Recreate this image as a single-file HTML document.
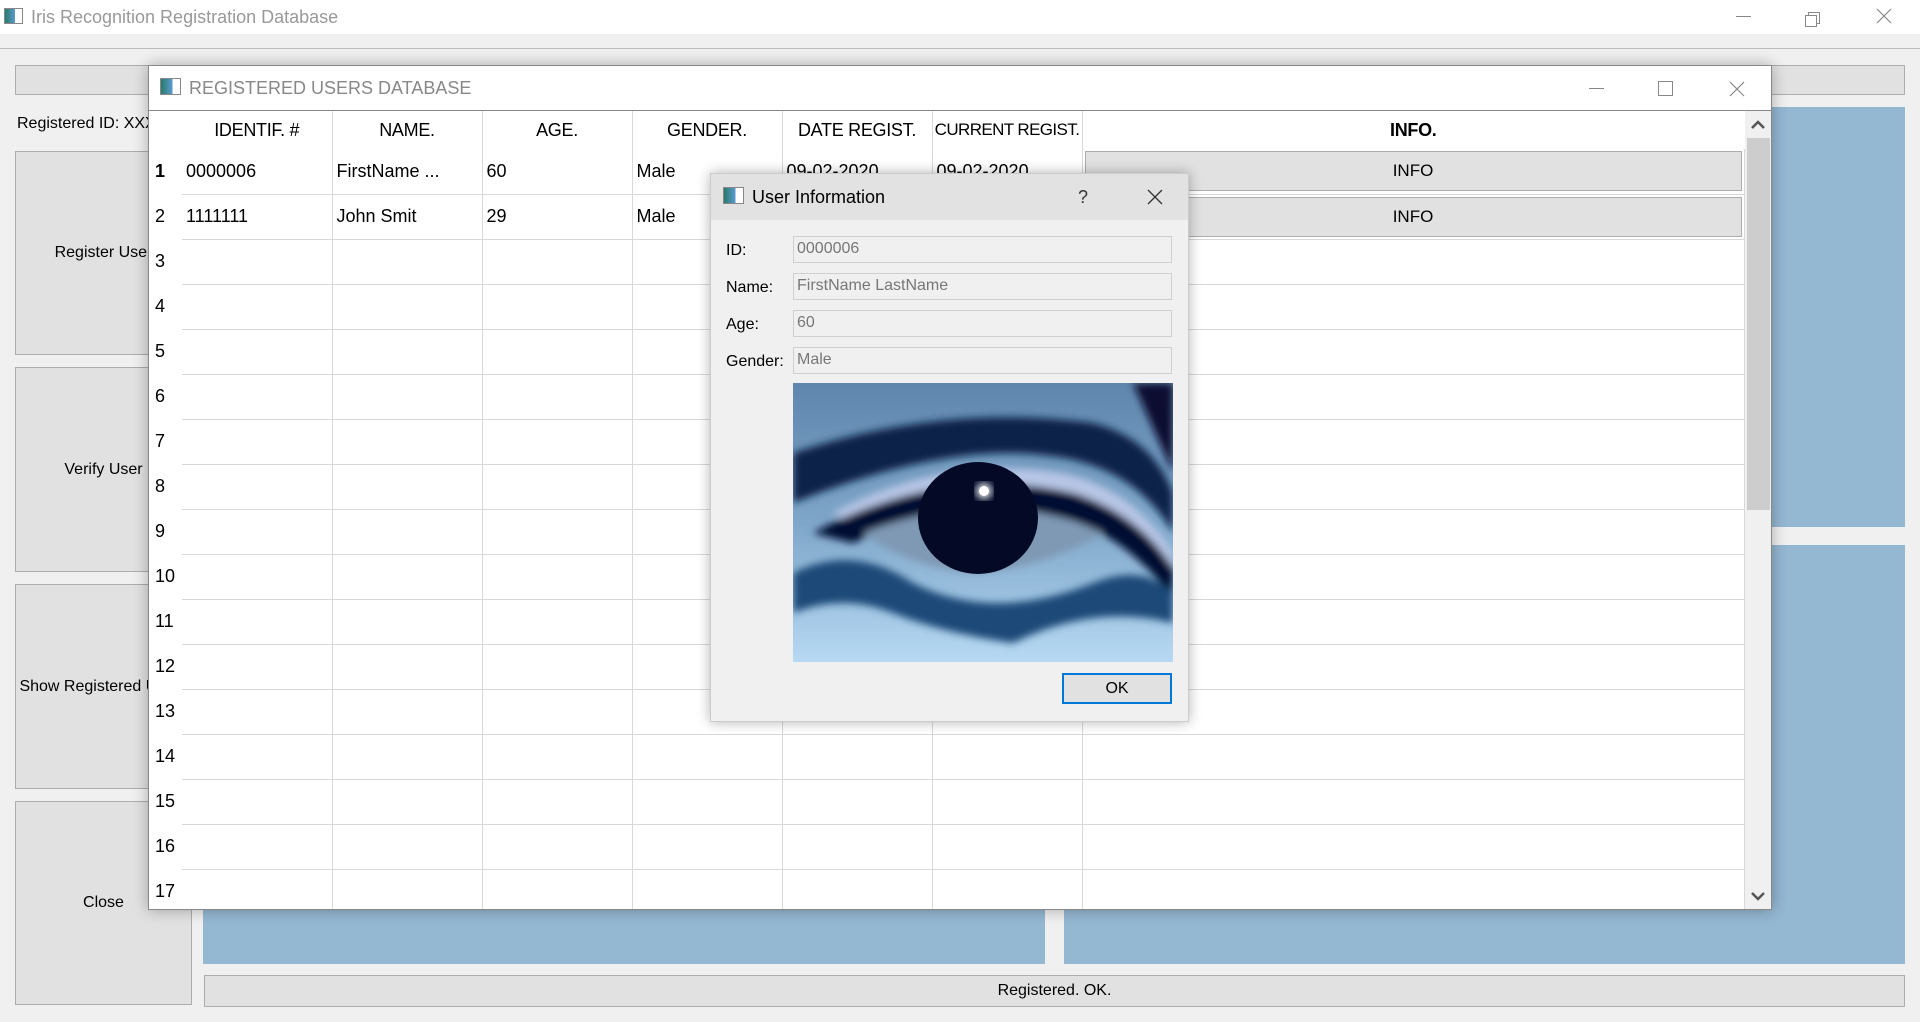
<!DOCTYPE html>
<html><head><meta charset="utf-8"><style>
*{box-sizing:border-box;margin:0;padding:0}
body{width:1920px;height:1022px;background:#f0f0f0;font-family:"Liberation Sans",sans-serif;position:relative;overflow:hidden;color:#000}
.a{position:absolute}
.btn{position:absolute;background:#e1e1e1;border:1px solid #adadad;font-size:16px;display:flex;align-items:center;justify-content:center}
.blue{position:absolute;background:#94b7d2}
table{border-collapse:collapse;table-layout:fixed;font-size:18px}
td{height:45px;border-right:1px solid #d8d8d8;border-bottom:1px solid #d8d8d8;padding-left:4px;white-space:nowrap;overflow:hidden}
td.v{border:none;width:33px;padding-left:6px}
th{height:38px;font-weight:normal;border-right:1px solid #d8d8d8;white-space:nowrap;overflow:hidden;letter-spacing:-0.3px}
.lbl{position:absolute;left:726px;font-size:16px}
.inp{position:absolute;left:793px;width:379px;height:27px;border:1px solid #cfcfcf;background:#f0f0f0;color:#777;font-size:16px;padding:3px 3px}
</style></head><body>
<div class="a" style="left:0;top:0;width:1920px;height:34px;background:#fff"></div>
<div class="a" style="left:4px;top:8px;width:19px;height:16px;border:1px solid #888;background:linear-gradient(90deg,#2a7a6a 0,#5a9ad0 60%,#fff 60%)"></div>
<div class="a" style="left:31px;top:7px;font-size:18px;color:#999">Iris Recognition Registration Database</div>
<div class="a" style="left:1736px;top:16px;width:15px;height:1px;background:#888"></div>
<div class="a" style="left:1808px;top:12px;width:12px;height:12px;border:1px solid #888;background:#fff"></div>
<div class="a" style="left:1805px;top:15px;width:12px;height:12px;border:1px solid #888;background:#fff"></div>
<svg class="a" style="left:1876px;top:8px" width="16" height="16"><path d="M1 1L15 15M15 1L1 15" stroke="#888" stroke-width="1.2"/></svg>
<div class="a" style="left:0;top:48px;width:1920px;height:1px;background:#bbb"></div>
<div class="a" style="left:15px;top:65px;width:1890px;height:30px;background:#e1e1e1;border:1px solid #adadad"></div>
<div class="a" style="left:17px;top:115px;font-size:16px">Registered ID: XXX</div>
<div class="btn" style="left:15px;top:151px;width:177px;height:204px">Register User</div>
<div class="btn" style="left:15px;top:367px;width:177px;height:205px">Verify User</div>
<div class="btn" style="left:15px;top:584px;width:177px;height:205px">Show Registered Users</div>
<div class="btn" style="left:15px;top:801px;width:177px;height:204px">Close</div>
<div class="blue" style="left:1772px;top:107px;width:133px;height:420px"></div>
<div class="blue" style="left:1064px;top:545px;width:841px;height:419px"></div>
<div class="blue" style="left:203px;top:890px;width:842px;height:74px"></div>
<div class="btn" style="left:204px;top:975px;width:1701px;height:32px">Registered. OK.</div>

<div class="a" style="left:148px;top:65px;width:1624px;height:845px;background:#fff;border:1px solid #888;box-shadow:0 0 14px rgba(0,0,0,.3);overflow:hidden">
 <div class="a" style="left:0;top:0;width:1624px;height:45px;border-bottom:1px solid #888"></div>
 <div class="a" style="left:11px;top:12px;width:21px;height:17px;border:1px solid #888;background:linear-gradient(90deg,#2a7a6a 0,#5a9ad0 60%,#fff 60%)"></div>
 <div class="a" style="left:40px;top:12px;font-size:18px;color:#888">REGISTERED USERS DATABASE</div>
 <div class="a" style="left:1440px;top:22px;width:15px;height:1px;background:#888"></div>
 <div class="a" style="left:1509px;top:15px;width:15px;height:15px;border:1px solid #888"></div>
 <svg class="a" style="left:1580px;top:15px" width="16" height="16"><path d="M1 1L15 15M15 1L1 15" stroke="#888" stroke-width="1.2"/></svg>
 <table class="a" style="left:0;top:45px;width:1595px">
  <colgroup><col style="width:33px"><col style="width:150px"><col style="width:150px"><col style="width:150px"><col style="width:150px"><col style="width:150px"><col style="width:150px"><col style="width:662px"></colgroup>
  <tr><th style="border:none"></th><th>IDENTIF. #</th><th>NAME.</th><th>AGE.</th><th>GENDER.</th><th>DATE REGIST.</th><th style="font-size:17px;letter-spacing:-0.6px">CURRENT REGIST.</th><th style="font-weight:bold;border:none">INFO.</th></tr>
  <tr><td class="v"><b>1</b></td><td>0000006</td><td>FirstName ...</td><td>60</td><td>Male</td><td>09-02-2020</td><td>09-02-2020</td><td style="padding:2px"><div style="height:40px;background:#e1e1e1;border:1px solid #adadad;display:flex;align-items:center;justify-content:center;font-size:17px">INFO</div></td></tr>
  <tr><td class="v">2</td><td>1111111</td><td>John Smit</td><td>29</td><td>Male</td><td></td><td></td><td style="padding:2px"><div style="height:40px;background:#e1e1e1;border:1px solid #adadad;display:flex;align-items:center;justify-content:center;font-size:17px">INFO</div></td></tr>
  <tr><td class="v">3</td><td></td><td></td><td></td><td></td><td></td><td></td><td></td></tr>
  <tr><td class="v">4</td><td></td><td></td><td></td><td></td><td></td><td></td><td></td></tr>
  <tr><td class="v">5</td><td></td><td></td><td></td><td></td><td></td><td></td><td></td></tr>
  <tr><td class="v">6</td><td></td><td></td><td></td><td></td><td></td><td></td><td></td></tr>
  <tr><td class="v">7</td><td></td><td></td><td></td><td></td><td></td><td></td><td></td></tr>
  <tr><td class="v">8</td><td></td><td></td><td></td><td></td><td></td><td></td><td></td></tr>
  <tr><td class="v">9</td><td></td><td></td><td></td><td></td><td></td><td></td><td></td></tr>
  <tr><td class="v">10</td><td></td><td></td><td></td><td></td><td></td><td></td><td></td></tr>
  <tr><td class="v">11</td><td></td><td></td><td></td><td></td><td></td><td></td><td></td></tr>
  <tr><td class="v">12</td><td></td><td></td><td></td><td></td><td></td><td></td><td></td></tr>
  <tr><td class="v">13</td><td></td><td></td><td></td><td></td><td></td><td></td><td></td></tr>
  <tr><td class="v">14</td><td></td><td></td><td></td><td></td><td></td><td></td><td></td></tr>
  <tr><td class="v">15</td><td></td><td></td><td></td><td></td><td></td><td></td><td></td></tr>
  <tr><td class="v">16</td><td></td><td></td><td></td><td></td><td></td><td></td><td></td></tr>
  <tr><td class="v">17</td><td></td><td></td><td></td><td></td><td></td><td></td><td></td></tr>
 </table>
 <div class="a" style="left:1596px;top:45px;width:28px;height:800px;background:#f0f0f0"></div>
 <div class="a" style="left:1598px;top:72px;width:23px;height:372px;background:#cdcdcd"></div>
 <svg class="a" style="left:1601px;top:52px" width="16" height="14"><path d="M2 10L8 4L14 10" stroke="#555" stroke-width="2.5" fill="none"/></svg>
 <svg class="a" style="left:1601px;top:823px" width="16" height="14"><path d="M2 4L8 10L14 4" stroke="#555" stroke-width="2.5" fill="none"/></svg>
</div>

<div class="a" style="left:710px;top:173px;width:479px;height:549px;background:#f0f0f0;border:1px solid #ccc;box-shadow:0 0 12px rgba(0,0,0,.3)">
 <div class="a" style="left:0;top:0;width:477px;height:46px;background:#e2e2e2"></div>
 <div class="a" style="left:12px;top:13px;width:21px;height:17px;border:1px solid #888;background:linear-gradient(90deg,#2a7a6a 0,#5a9ad0 60%,#fff 60%)"></div>
 <div class="a" style="left:41px;top:13px;font-size:18px">User Information</div>
 <div class="a" style="left:367px;top:13px;font-size:18px;color:#333">?</div>
 <svg class="a" style="left:436px;top:15px" width="16" height="16"><path d="M1 1L15 15M15 1L1 15" stroke="#333" stroke-width="1.3"/></svg>
</div>
<div class="lbl" style="top:242px">ID:</div>
<div class="lbl" style="top:279px">Name:</div>
<div class="lbl" style="top:316px">Age:</div>
<div class="lbl" style="top:353px">Gender:</div>
<div class="inp" style="top:236px">0000006</div>
<div class="inp" style="top:273px">FirstName LastName</div>
<div class="inp" style="top:310px">60</div>
<div class="inp" style="top:347px">Male</div>
<svg class="a" style="left:793px;top:383px" width="380" height="279" viewBox="0 0 380 279">
 <defs>
  <linearGradient id="bg" x1="0" y1="0" x2="0" y2="1"><stop offset="0" stop-color="#5f86ad"/><stop offset=".5" stop-color="#7ea6c9"/><stop offset="1" stop-color="#b7d9f3"/></linearGradient>
  <filter id="bl"><feGaussianBlur stdDeviation="4"/></filter>
 </defs>
 <rect width="380" height="279" fill="url(#bg)"/>
 <g filter="url(#bl)">
  <path d="M340 0L380 0L380 90Z" fill="#0a1030"/>
  <path d="M0 70Q150 20 300 40Q360 55 380 110L380 150Q340 80 250 72Q150 60 0 120Z" fill="#0e2248"/>
  <path d="M40 130Q150 70 270 90Q340 105 380 170L380 200Q330 120 250 105Q150 90 60 140Z" fill="#b8c6e6"/>
  <path d="M20 150Q150 80 280 110Q345 130 380 185L380 215Q330 150 270 135Q160 110 60 160Z" fill="#061030"/>
  <path d="M70 150Q200 100 310 150Q250 185 180 190Q120 185 70 150Z" fill="#7f98b4"/>
  <path d="M0 190Q60 160 120 200Q200 240 300 200Q350 180 380 210L380 240Q300 220 220 260Q150 250 100 230Q50 210 0 230Z" fill="#1d4a78"/>
 </g>
 <ellipse cx="185" cy="135" rx="60" ry="56" fill="#040a26"/>
 <circle cx="191" cy="108" r="8" fill="#e8eef8" filter="url(#bl)"/>
 <circle cx="191" cy="108" r="5" fill="#fff"/>
</svg>
<div class="a" style="left:1062px;top:673px;width:110px;height:31px;background:#e1e1e1;border:2px solid #0078d7;font-size:16px;display:flex;align-items:center;justify-content:center">OK</div>
</body></html>
